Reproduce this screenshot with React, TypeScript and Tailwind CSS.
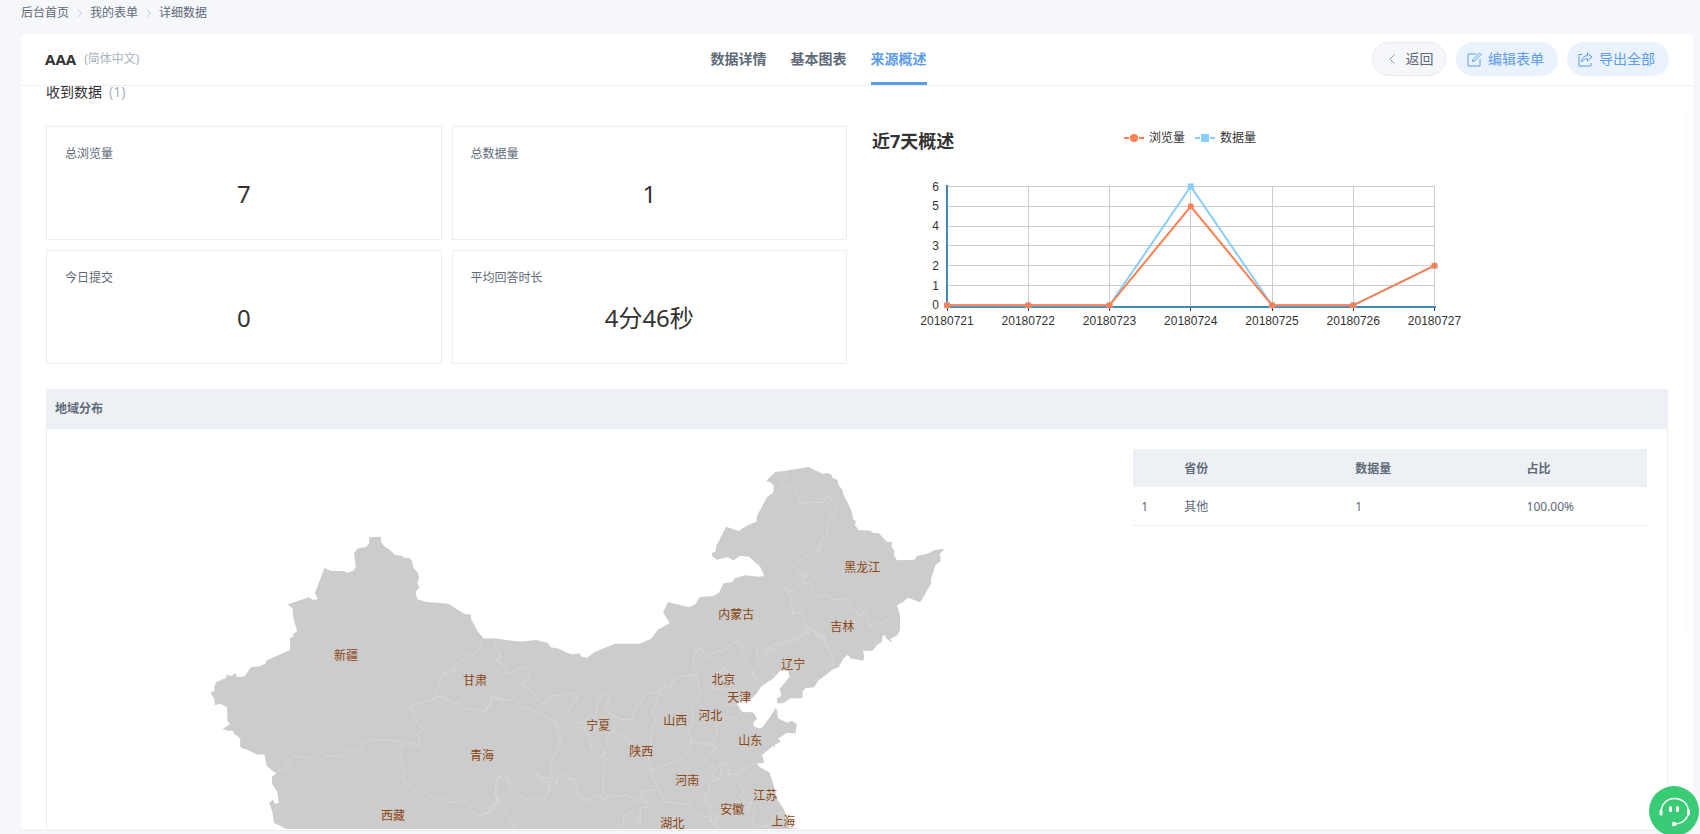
const stats = [
  { label: '总浏览量', value: '7' },
  { label: '总数据量', value: '1' },
  { label: '今日提交', value: '0' },
  { label: '平均回答时长', value: '4分46秒' },
]

const tabs = ['数据详情', '基本图表', '来源概述']
const crumbs = ['后台首页', '我的表单', '详细数据']

const days = ['20180721', '20180722', '20180723', '20180724', '20180725', '20180726', '20180727']
const views = [0, 0, 0, 5, 0, 0, 2]
const records = [0, 0, 0, 6, 0, 0, 2]

const rows = [{ province: '其他', count: 1, ratio: '100.00%' }]

const chartX = (i: number) => 80 + i * 81.25
const chartY = (v: number) => 60.5 + (6 - v) * 19.8
const toPoints = (data: number[]) => data.map((v, i) => `${chartX(i)},${chartY(v)}`).join(' ')

const provinces: [string, number, number][] = [
  ['新疆', 346, 655],
  ['甘肃', 475, 680],
  ['青海', 482, 755],
  ['西藏', 393, 815],
  ['内蒙古', 736, 614],
  ['宁夏', 598, 725],
  ['陕西', 641, 751],
  ['山西', 675, 720],
  ['河北', 710, 715],
  ['北京', 723, 679],
  ['天津', 739, 697],
  ['山东', 750, 740],
  ['河南', 687, 780],
  ['安徽', 732, 809],
  ['江苏', 765, 795],
  ['湖北', 672, 823],
  ['黑龙江', 862, 567],
  ['吉林', 842, 626],
  ['辽宁', 793, 664],
  ['上海', 783, 821],
]

const outline =
  'M290 860 286.7 829 274 823 272.3 811.7 269 802.7 272.7 799.3 275 804 278.7 802.7 277.3 791.7 271.7 783.3 272 776.7 276 773.3 266.7 766 264.3 754.3 256.7 754.3 246.7 749.3 242.7 748.7 239.7 746 240.3 738.3 234.3 734 232.7 730.7 226.7 730.7 222.3 728 226.7 726.7 229.7 723.3 227.3 721 227 707.3 220.7 704 214.7 705 214 698.3 210.3 692.7 214.3 690.7 214.3 686 216.7 682 226 677.7 226.7 674.7 231.7 676 235.3 673 237 677.3 244.7 676.3 251 667 260 666.3 265.3 663.7 266.7 660.3 290 650 290 638 293.3 636.7 293 634.3 297 631.3 293 616.7 292.7 608.7 287.7 604.3 309 597.3 312.3 599.7 317.7 599.3 315 592.7 324.3 568 331 571 344 571 346.7 573 353.3 570.7 355.7 567 354 553.3 357 548.7 366.3 546.7 369 543.3 369 537.3 381 536.7 381 541.7 383.7 546 389 549.3 395 555 402 555.7 404 557.7 409.3 558 412 561.3 413.3 567.7 417.7 572.7 419 578.3 417.3 582.7 419.3 587.7 415.3 591.7 417.3 599.3 426.7 602 448.3 603.7 464 613.7 470.7 614.7 471 619 477.3 631 483.3 638.5 493.3 638.3 520 641.7 536 640 547.7 643 550.7 647.3 559 648.7 566.7 653 572.7 654.3 580 653.3 580.3 656.3 586.7 657.7 595 651.7 614.7 643.7 639.3 643.7 651 638.7 657.7 629.7 669.7 623 663 612.7 667.7 602 689.3 607.3 695.3 604 699.3 597.3 713.3 596 718.7 592.7 723.3 583.3 732.3 582 734.3 578.3 745 575.3 758.3 576.7 764 576 760 566.7 748.7 556.7 739.3 555.7 733.7 560.3 727.3 557.3 716.7 559.7 711.7 556 712 552.7 715.3 551.7 716 546 726 526.7 738.3 531 748.3 524.7 756.3 521.7 756.7 516 766.7 497.3 773.3 492.3 773.3 485 770 482.3 766 481 775 472 785 470.7 808.3 467 823.3 474.3 826 472.7 831 474.3 832.7 478.3 837 479.7 838.3 485 842.3 490 843 494.3 847.7 503.3 851.7 512 852.7 519.3 855.7 521 854.7 525 858.3 530 870 530.7 873.3 533.3 878.3 533 886.7 541.7 891.7 542 891.3 546.7 894.3 551 893.3 554 896.7 560.3 914.3 559.7 916.7 556 928.3 553.3 935 549.7 944.3 549 939.3 554.3 940.7 560.7 935.3 565 930.7 579 930.7 584 923.3 596.7 920 602.3 907.7 597.7 902.7 602 896.7 605.3 899.7 615 899.7 630 897.3 635 890 639 892 643.3 886 638.3 884.7 635.3 882.3 636 881.7 641.7 876.7 645 872.3 650.7 862.7 650.7 864 656.7 862.7 660.7 850.7 658.3 847.3 655 843.3 658.3 838.3 667.3 833.3 669 818.7 680 813.7 687.3 805 688.3 802.3 691.7 802.3 698.3 790 698.3 783.3 703.3 777 703.3 776.7 698.3 781.3 696 779.3 689.3 789.3 676.7 788 670.7 780 670.7 773.3 678.3 760.7 686.7 756.7 693.3 751.7 698.3 748.3 700.7 740 700.7 737 704 742 712 752.7 712.3 757 718.7 753.3 722 753.3 725.7 758.3 728.3 762 727.3 770 716.7 775.3 708 777.3 711.7 777.7 718.3 786.7 722.7 791.7 720.7 796.7 724 795.3 733.3 786.7 732.7 778 738.3 780.7 741.7 774.3 745 775 747.7 772.7 746 761.7 755 764.3 762.7 757 763.3 759 766.7 769.3 772.3 773.3 785 777.3 800 782.7 807.3 787.7 818.3 789.3 828 797 828.5 800 860Z'

// province borders, one entry per map tile
const borders = [
  {
    tile: 'translate(200 520) scale(0.33333)',
    d: 'M850 357 836 373 844 380 820 403 805 405 768 435 760 455 730 458 708 520 708 535 628 560 641 573 640 590 668 627 648 645 658 655 658 676 620 668 607 678M228 758 232 751 256 750 277 706 325 714 356 691 372 708 413 709 450 692 472 693 486 682 486 674 525 659 570 659 607 668 600 680 610 688M602 705 606 735 613 745 610 775 625 798 645 815M672 816 700 834 730 838 746 848 775 842 803 850 818 878 840 886 868 880 873 860 892 843 900 845 886 820 893 800 886 785 900 765M708 530 733 528 735 537 762 548 778 550 785 564 830 568 845 577 858 572 860 562 873 560 875 528 900 539M880 357 902 410 888 418 920 445',
  },
  {
    tile: 'translate(480 560) scale(0.33333)',
    d: 'M62 290 48 298 80 325 82 340 98 336 120 323 145 328 145 350 122 373 160 398 168 415 185 428 200 425 208 410 230 405 245 410 265 398 290 403 288 420 260 460 285 487 320 490 348 465 350 440 368 402 385 402 384 425 375 445 385 458 420 478 458 480 462 455 495 405 545 390 550 380 570 385 578 362 605 348 645 345 652 335 638 310 645 275 665 265 675 292 710 275 735 270 755 250 775 245 785 252 782 270 795 285 795 305',
  },
  {
    tile: 'translate(480 560) scale(0.33333)',
    d: 'M0 458 18 452 38 408 80 422 105 415 125 440 185 460 190 468 225 485 235 520 243 555 225 585 210 605 217 620 210 635 218 650 195 655 170 640 180 660 205 668 208 690 230 665 232 650 248 643 260 655 283 658 297 713 325 722 355 705 370 718 400 708 440 706 475 723 500 728 505 740 480 745 480 790M45 690 50 655 70 646 85 655 90 680 122 710 155 722 175 710 190 718 208 690M45 690 50 720 75 745 70 755 95 780 102 806M50 720 42 750 0 765M308 497 318 515 328 530 335 565 355 588 372 590 370 570 386 560 380 540 390 515M402 478 402 515 452 543 450 560 465 590M380 595 375 605 368 610 375 640 368 660 370 705',
  },
  {
    tile: 'translate(480 560) scale(0.33333)',
    d: 'M540 395 515 455 525 480 512 520 512 570 505 600 512 625 528 628 575 605 605 595 630 572 628 545 635 535 622 510 640 480 635 445 660 405 655 372 645 345M512 625 520 660 545 705 550 725 590 730 632 733 635 750 665 770 690 768 695 790 712 800M530 690 480 692 490 705 480 712 505 728M630 545 690 553 710 525 708 495 745 470 770 475 785 455M690 553 710 560 670 600 705 625 695 645 715 660M795 305 808 318M693 355 697 385 725 390 745 385 760 395 770 380 755 365 745 335 733 320 725 335 705 340ZM770 390 762 410 745 420 742 432 760 437 772 435M480 790 450 755 430 770 430 790 418 806',
  },
  {
    tile: 'translate(640 630) scale(0.33333)',
    d: 'M237 405 258 400 268 415 262 430 290 435 300 418 320 415 350 395M237 405 245 425 235 450 225 445 208 465 205 485 190 490 200 505 195 515 212 525 212 545 235 560 225 570 235 597M262 430 285 455 305 470 310 490 300 500 325 520 335 515 320 540 345 550 335 575 355 590 385 585M385 595 378 580 395 570 405 550 430 545M365 158 340 140 337 125 352 110 355 80 348 55 360 45 378 72 400 60 425 45 450 40 520 0M525 5 530 20 550 15 552 42 570 65 580 105',
  },
  {
    tile: 'translate(690 450) scale(0.33333)',
    d: 'M278 62 290 75 268 98 290 112 305 103 318 112 318 125 332 158 350 160 360 157 400 158 405 143 415 142 440 172 415 215 408 262 395 265 385 308 378 292 312 347 335 380 350 368 352 380 333 385 340 400 362 400 370 415 368 425 385 438 408 435 430 450 460 446 480 455 478 470 500 485 502 500 525 485 540 530 555 515 580 518 590 508 610 530 622 535M340 400 318 415 305 425 285 412 300 440 308 490 335 485 350 530 345 545 360 535 385 550 388 565 400 553 415 598M345 545 325 560 290 572 250 585 230 600',
  },
]

const CrumbArrow = () => (
  <svg viewBox="0 0 7 10" className="h-[10px] w-[7px]" fill="none" stroke="#c4c9d2">
    <path d="M1.5 1 5.5 5 1.5 9" />
  </svg>
)

const TrendChart = () => (
  <svg
    viewBox="0 0 648 240"
    preserveAspectRatio="xMinYMin meet"
    className="h-60 w-full font-['Liberation_Sans','Noto_Sans_CJK_SC',sans-serif]"
    fill="#333"
    fontSize="12"
  >
    <text x="5" y="22" fontSize="18" fontWeight="700" className="font-['Noto_Sans','Noto_Sans_CJK_SC',sans-serif]">
      近7天概述
    </text>

    <g strokeWidth="2">
      <path d="M257 12h5M272 12h5" stroke="#ff7f50" />
      <circle cx="267" cy="12" r="4" fill="#ff7f50" />
      <path d="M328 12h5M343 12h5" stroke="#87cefa" />
      <rect x="334" y="8" width="8" height="8" fill="#87cefa" />
    </g>
    <text x="282" y="16">浏览量</text>
    <text x="353" y="16">数据量</text>

    <g stroke="#ccc" shapeRendering="crispEdges">
      {[1, 2, 3, 4, 5, 6].map((v) => (
        <path key={v} d={`M80 ${Math.floor(chartY(v)) + 0.5}H568`} />
      ))}
      {days.map((day, i) => (
        <path key={day} d={`M${Math.floor(chartX(i)) + 0.5} 60V180`} />
      ))}
    </g>
    {[0, 1, 2, 3, 4, 5, 6].map((v) => (
      <text key={v} x="72" y={chartY(v) + 4} textAnchor="end">
        {v}
      </text>
    ))}
    {days.map((day, i) => (
      <g key={day}>
        <path d={`M${Math.floor(chartX(i)) + 0.5} 181v4`} stroke="#333" />
        <text x={chartX(i)} y="199" textAnchor="middle">
          {day}
        </text>
      </g>
    ))}
    <path d="M80 59V181H569" fill="none" stroke="#48b" strokeWidth="2" />

    <polyline points={toPoints(records)} fill="none" stroke="#87cefa" strokeWidth="2" />
    {records.map((v, i) => (
      <rect key={i} x={chartX(i) - 3} y={chartY(v) - 3} width="6" height="6" fill="#87cefa" />
    ))}
    <polyline points={toPoints(views)} fill="none" stroke="#ff7f50" strokeWidth="2" />
    {views.map((v, i) => (
      <circle key={i} cx={chartX(i)} cy={chartY(v)} r="3" fill="#ff7f50" />
    ))}
  </svg>
)

const ChinaMap = () => (
  <svg viewBox="67 449 1053 400" className="h-auto w-2/3 shrink-0 self-start">
    <path d={outline} fill="#ccc" />
    {borders.map(({ tile, d }, i) => (
      <path key={i} d={d} transform={tile} fill="none" stroke="#dadada" strokeWidth="2.5" strokeLinejoin="round" />
    ))}
    <g fill="#8b4513" fontSize="12" textAnchor="middle">
      {provinces.map(([name, x, y]) => (
        <text key={name} x={x} y={y + 4.5}>
          {name}
        </text>
      ))}
    </g>
  </svg>
)

export default function App() {
  return (
    <div className="relative flex h-screen flex-col overflow-hidden bg-[#f5f7fb] pr-[7px] pb-[3px] pl-[21px] font-['Noto_Sans','Noto_Sans_CJK_SC',sans-serif] text-xs text-[#606a78]">
      <nav className="flex h-[34px] shrink-0 items-start gap-[7px] pt-[5px]">
        {crumbs.map((name, i) => (
          <div key={name} className="flex items-center gap-[7px]">
            {i > 0 && <CrumbArrow />}
            <a href="#" className="leading-4">
              {name}
            </a>
          </div>
        ))}
      </nav>

      <div className="relative flex min-h-0 flex-1 flex-col rounded border-b border-[#e8ebf0] bg-white">
        <header className="grid h-[52px] shrink-0 grid-cols-[1fr_auto_1fr] border-b border-[#edeff2] px-6">
          <div className="flex items-center gap-2 pb-px">
            <h1 className="text-[15px] font-bold text-[#333]">AAA</h1>
            <span className="text-[#a9b3c1]">(简体中文)</span>
          </div>
          <div className="mr-[77px] flex gap-6">
            {tabs.map((tab) => (
              <button
                key={tab}
                className={
                  tab === '来源概述'
                    ? 'border-b-[3px] border-[#5c9cea] pt-px text-sm font-bold text-[#5c9cea]'
                    : 'border-b-[3px] border-transparent pt-px text-sm font-bold'
                }
              >
                {tab}
              </button>
            ))}
          </div>
          <div className="flex items-start justify-end gap-[9px] pt-2 text-sm">
            <button className="mr-px flex h-[34px] w-[74px] items-center justify-center gap-[11px] rounded-full border border-[#e6e8ec] bg-[#f5f7fb] pl-1">
              <svg viewBox="0 0 6 10" className="h-[10px] w-[6px]" fill="none" stroke="#8e9bac">
                <path d="M5.5.5 1 5l4.500 4.500" />
              </svg>
              返回
            </button>
            <button className="flex h-[34px] w-[102px] items-center justify-center gap-[6px] rounded-full bg-[#eaf2fd] pr-[3px] text-[#5c9cea]">
              <svg viewBox="0 0 15 15" className="size-[15px]" fill="none" stroke="currentColor">
                <path d="M9 2H1.500a.5.5 0 0 0-.5.5V14h12V7" />
                <path d="M5.500 9.500 6 7.500 12.500 1l1.500 1.500L7.500 9Z" />
              </svg>
              编辑表单
            </button>
            <button className="flex h-[34px] w-[102px] items-center justify-center gap-[6px] rounded-full bg-[#eaf2fd] pr-[3px] text-[#5c9cea]">
              <svg viewBox="0 0 15 15" className="size-[15px]" fill="none" stroke="currentColor">
                <path d="M4 2.500H1V14h12v-3" />
                <path d="M9.500 1 14 5 9.500 9V6.800C7 6.500 5 7.500 3.500 10c0-3.500 2-6 6-6.500Z" strokeLinejoin="round" />
              </svg>
              导出全部
            </button>
          </div>
        </header>

        <main className="mb-px flex min-h-0 flex-1 flex-col overflow-hidden px-[25px]">
          <h2 className="flex shrink-0 gap-[7px] text-sm leading-3 text-[#333]">
            收到数据 <span className="text-[#a9b3c1]">(1)</span>
          </h2>

          <div className="mt-7 flex shrink-0 items-start gap-5">
            <div className="grid w-[calc(50%-10px)] grid-cols-2 gap-[10px]">
              {stats.map(({ label, value }) => (
                <div key={label} className="h-[114px] border border-[#eceef2] px-[18px] pt-[19px]">
                  <div className="leading-4">{label}</div>
                  <div className="mt-4 text-center text-2xl text-[#333]">{value}</div>
                </div>
              ))}
            </div>
            <div className="w-2/5">
              <TrendChart />
            </div>
          </div>

          <section className="mt-[23px] flex min-h-0 flex-1 flex-col">
            <h3 className="h-10 shrink-0 bg-[#edf1f5] px-[9px] leading-10 font-bold">地域分布</h3>
            <div className="flex min-h-0 flex-1 items-start overflow-hidden border-x border-[#edeff2] px-5 pt-5">
              <ChinaMap />
              <div className="flex-1 pl-[13px]">
                <table className="w-full table-fixed text-left">
                  <thead>
                    <tr className="h-[38px] bg-[#edf1f5]">
                      <th className="w-1/12 px-2 pt-0.5" />
                      <th className="w-1/3 px-2 pt-0.5 font-bold">省份</th>
                      <th className="w-1/3 px-2 pt-0.5 font-bold">数据量</th>
                      <th className="w-1/4 px-2 pt-0.5 font-bold">占比</th>
                    </tr>
                  </thead>
                  <tbody>
                    {rows.map(({ province, count, ratio }, i) => (
                      <tr key={province} className="h-[38px] border-b border-[#edeff2]">
                        <td className="px-2 pt-0.5">{i + 1}</td>
                        <td className="px-2 pt-0.5">{province}</td>
                        <td className="px-2 pt-0.5">{count}</td>
                        <td className="px-2 pt-0.5">{ratio}</td>
                      </tr>
                    ))}
                  </tbody>
                </table>
              </div>
            </div>
          </section>
        </main>

        <div className="absolute top-[74px] right-[3px] h-[66%] w-[5px] rounded-full bg-[#fcfcfc]" />
      </div>

      <button
        aria-label="在线客服"
        className="absolute right-px -bottom-0.5 flex size-[50px] items-center justify-center rounded-full bg-[#3acb75]"
      >
        <svg viewBox="0 0 50 50" className="size-full" fill="none" stroke="#fff" strokeWidth="1.5" strokeLinecap="round">
          <path d="M12 27C12 8 38 8 39.5 25 39.5 32 34 37.5 26 38" />
          <path d="M12 25v3M39.5 25v3" strokeWidth="3" />
          <path d="M21.5 21.5v3M28.5 21.5v3" strokeWidth="3" />
          <circle cx="25" cy="38" r="1.5" fill="#fff" />
        </svg>
      </button>
    </div>
  )
}
